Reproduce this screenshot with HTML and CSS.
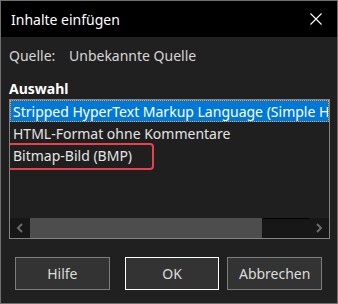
FILE: index.html
```html
<!DOCTYPE html>
<html lang="de">
<head>
<meta charset="utf-8">
<title>Inhalte einfügen</title>
<link rel="stylesheet" href="styles.css">
</head>
<body>
<div class="window">
  <div class="titlebar">
    <span class="title">Inhalte einfügen</span>
    <svg class="close" width="12" height="12" viewBox="0 0 12 12"><path d="M0.5 0.5 L11.5 11.5 M11.5 0.5 L0.5 11.5" stroke="#ffffff" stroke-width="1.1" fill="none"/></svg>
  </div>
  <div class="content">
    <div class="source"><span class="source-label">Quelle:</span><span>Unbekannte Quelle</span></div>
    <div class="section-label">Auswahl</div>
    <div class="listbox">
      <div class="items">
        <div class="item selected">Stripped HyperText Markup Language (Simple HTML)</div>
        <div class="item">HTML-Format ohne Kommentare</div>
        <div class="item">Bitmap-Bild (BMP)</div>
        <div class="highlight"></div>
      </div>
      <div class="hscroll">
        <div class="arrow"><svg width="8" height="10" viewBox="0 0 8 10"><path d="M6 1 L2 5 L6 9" stroke="#6b6b6b" stroke-width="2" fill="none"/></svg></div>
        <div class="thumb"></div>
        <div class="track"></div>
        <div class="arrow"><svg width="8" height="10" viewBox="0 0 8 10"><path d="M2 1 L6 5 L2 9" stroke="#6b6b6b" stroke-width="2" fill="none"/></svg></div>
      </div>
    </div>
    <div class="buttons">
      <button class="btn btn-help">Hilfe</button>
      <button class="btn btn-default">OK</button>
      <button class="btn">Abbrechen</button>
    </div>
  </div>
</div>
</body>
</html>
```
FILE: styles.css
```css
html, body {
  margin: 0;
  padding: 0;
  background: #202020;
}
.window {
  width: 338px;
  height: 304px;
  box-sizing: border-box;
  border: 1px solid #6f6f6f;
  background: #202020;
  display: flex;
  flex-direction: column;
  font-family: "Noto Sans", "Open Sans", sans-serif;
  font-size: 14px;
  color: #d6d6d6;
}
.titlebar {
  height: 36px;
  background: #000;
  display: flex;
  align-items: center;
  justify-content: space-between;
  padding: 0 15px 0 10px;
  flex: none;
}
.title {
  color: #ffffff;
  font-size: 14px;
}
.close {
  display: block;
}
.content {
  padding: 0 7px 0 8px;
  display: flex;
  flex-direction: column;
  flex: 1;
}
.source {
  margin-top: 9px;
  height: 20px;
  line-height: 20px;
  display: flex;
}
.source-label {
  width: 60px;
}
.section-label {
  margin-top: 13px;
  height: 20px;
  line-height: 20px;
  font-weight: bold;
  color: #ffffff;
}
.listbox {
  height: 140px;
  box-sizing: border-box;
  border: 1px solid #838383;
  background: #1f1f1f;
  display: flex;
  flex-direction: column;
}
.items {
  flex: 1;
  position: relative;
  overflow: hidden;
}
.item {
  height: 22px;
  line-height: 21px;
  padding-left: 2px;
  white-space: nowrap;
  overflow: hidden;
  color: #e4e4e4;
  border: 1px solid transparent;
  box-sizing: border-box;
}
.item.selected {
  background: #0078d7;
  color: #ffffff;
  border: 1px dotted #ff9a2e;
}
.highlight {
  position: absolute;
  left: -3px;
  top: 43px;
  width: 147px;
  height: 27px;
  box-sizing: border-box;
  border: 2px solid #e8414e;
  border-radius: 4px;
}
.hscroll {
  height: 20px;
  display: flex;
  background: #171717;
  flex: none;
}
.arrow {
  width: 20px;
  display: flex;
  align-items: center;
  justify-content: center;
}
.thumb {
  width: 232px;
  background: #4d4d4d;
}
.track {
  flex: 1;
  border-top: 1px solid #000;
}
.buttons {
  display: flex;
  margin-top: 18px;
  padding-left: 6px;
}
.btn {
  width: 95px;
  height: 33px;
  box-sizing: border-box;
  background: #333333;
  border: 1px solid #7d7d7d;
  color: #dcdcdc;
  font-family: "Noto Sans", "Open Sans", sans-serif;
  font-size: 14px;
  padding: 0;
  margin: 0 8px 0 0;
}
.btn-help {
  margin-right: 15px;
}
.btn-default {
  border-color: #ffffff;
}
```
